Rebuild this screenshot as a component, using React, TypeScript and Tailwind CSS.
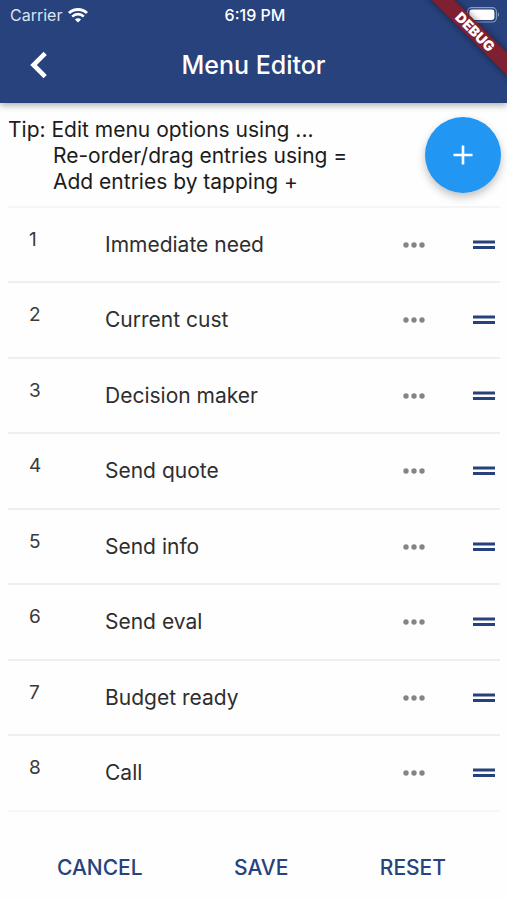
const entries = [
  'Immediate need',
  'Current cust',
  'Decision maker',
  'Send quote',
  'Send info',
  'Send eval',
  'Budget ready',
  'Call',
];

function WifiIcon() {
  return (
    <svg width="20" height="15" viewBox="0 0 20 15" fill="none" stroke="white" aria-hidden="true">
      <path d="M1 5C6 0.4 14 0.4 19 5" strokeWidth="2.9" />
      <path d="M4.2 8.6C7.5 5.4 12.5 5.4 15.8 8.6" strokeWidth="2.7" />
      <path d="M10 14.5L6.9 11.4C8.6 9.8 11.4 9.8 13.1 11.4Z" fill="white" stroke="none" />
    </svg>
  );
}

function BatteryIcon() {
  return (
    <svg width="33" height="16" viewBox="0 0 33 16" aria-hidden="true">
      <rect x="0.6" y="0.6" width="28.8" height="14.4" rx="4" fill="none" stroke="#8c9bc0" strokeWidth="1.1" />
      <rect x="2.4" y="2.6" width="25" height="10.4" rx="2.4" fill="white" />
      <path d="M30.8 5.6C32.4 6.2 32.4 9.4 30.8 10Z" fill="#8c9bc0" />
    </svg>
  );
}

function MenuRow({ index, label }: { index: number; label: string }) {
  return (
    <li className="flex items-center border-b-2 border-[#efefef] last:border-[#f7f7f7] odd:h-[75px] even:h-[76px]">
      <span className="w-[97px] shrink-0 pb-[10px] pl-[21px] text-[19px] leading-6 text-[#3a3a3a]">{index}</span>
      <span className="flex-1 text-[21px] leading-7 text-[#2e2e2e]">{label}</span>
      <button type="button" aria-label={`Edit ${label}`} className="flex h-12 w-12 items-center justify-center">
        <svg width="24" height="8" viewBox="0 0 24 8" fill="#858585" aria-hidden="true">
          <circle cx="4" cy="4" r="2.7" />
          <circle cx="12" cy="4" r="2.7" />
          <circle cx="20" cy="4" r="2.7" />
        </svg>
      </button>
      <button type="button" aria-label={`Move ${label}`} className="ml-[34px] mr-1 flex h-12 items-center">
        <svg width="24" height="10" viewBox="0 0 24 10" fill="#26417c" aria-hidden="true">
          <rect x="1" y="0.5" width="22" height="3" />
          <rect x="1" y="6" width="22" height="3" />
        </svg>
      </button>
    </li>
  );
}

export default function App() {
  return (
    <div className="flex min-h-screen flex-col bg-[#fefefe] font-['Inter',sans-serif]">
      {/* Status bar and app bar */}
      <header className="relative z-10 bg-[#27427c] text-white shadow-[0_2px_7px_rgba(0,0,0,0.35)]">
        <div className="grid h-[30px] grid-cols-[1fr_auto_1fr] items-center pl-[10px] pr-[7px] text-[16px] leading-5">
          <div className="flex items-center gap-1.5 text-[#dde3f0]">
            Carrier
            <WifiIcon />
          </div>
          <span className="font-medium">6:19 PM</span>
          <div className="flex justify-end">
            <BatteryIcon />
          </div>
        </div>
        <div className="grid h-[73px] grid-cols-[1fr_auto_1fr] items-center pb-1">
          <button type="button" aria-label="Back" className="ml-[15px] flex h-12 w-12 items-center justify-center">
            <svg width="18" height="28" viewBox="0 0 18 28" fill="none" stroke="white" strokeWidth="4.6" aria-hidden="true">
              <path d="M15.2 2.3L3.5 14L15.2 25.7" />
            </svg>
          </button>
          <h1 className="text-[25px] font-medium leading-8">Menu Editor</h1>
        </div>

        {/* Debug ribbon */}
        <div className="pointer-events-none absolute inset-0 overflow-hidden">
          <div className="absolute -right-7 top-6 h-4 w-[120px] rotate-45 bg-[#7f2032] text-center text-[14px] font-black leading-4 shadow-[0_0_7px_rgba(0,0,0,0.5)]">
            DEBUG
          </div>
        </div>
      </header>

      <main className="pl-2 pr-[7px]">
        <section className="flex items-start justify-between border-b-2 border-[#f5f5f5] pb-[11px] pt-[14px]">
          <div className="text-[21px] leading-[26px] text-[#1c1c1c]">
            <p>Tip: Edit menu options using ...</p>
            <p className="pl-[45px]">Re-order/drag entries using =</p>
            <p className="pl-[45px]">Add entries by tapping +</p>
          </div>
          <button
            type="button"
            aria-label="Add entry"
            className="-mr-px flex h-[76px] w-[76px] shrink-0 items-center justify-center rounded-full bg-[#2196f3] shadow-[0_4px_8px_rgba(0,0,0,0.25)]"
          >
            <svg width="20" height="20" viewBox="0 0 20 20" stroke="white" strokeWidth="2.6" aria-hidden="true">
              <path d="M10 0.5V19.5M0.5 10H19.5" />
            </svg>
          </button>
        </section>

        <ul>
          {entries.map((label, i) => (
            <MenuRow key={label} index={i + 1} label={label} />
          ))}
        </ul>
      </main>

      {/* Actions */}
      <footer className="flex items-center justify-between pl-[57px] pr-[61px] pt-9 text-[21px] font-medium leading-10 text-[#27427c]">
        <button type="button">CANCEL</button>
        <button type="button">SAVE</button>
        <button type="button">RESET</button>
      </footer>
    </div>
  );
}
